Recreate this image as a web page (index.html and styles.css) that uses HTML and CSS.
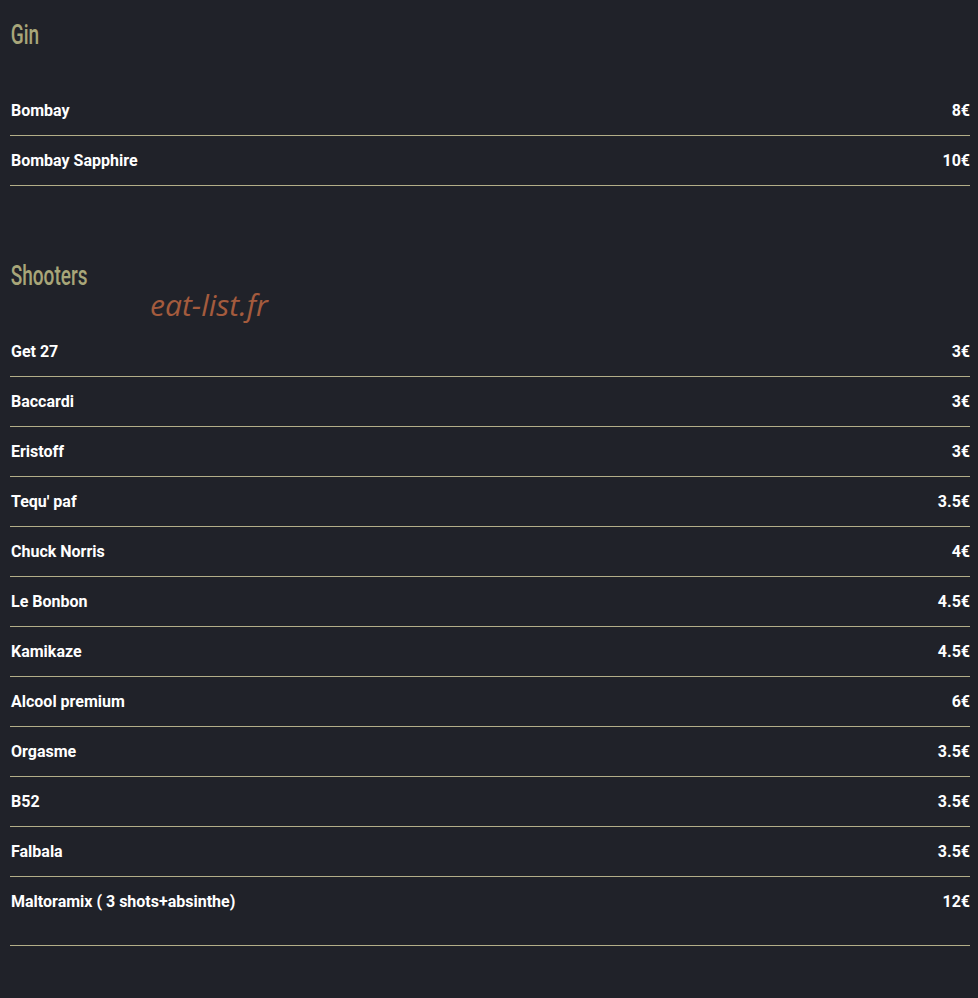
FILE: index.html
```html
<!DOCTYPE html>
<html lang="fr">
<head>
<meta charset="utf-8">
<title>Carte</title>
<link rel="stylesheet" href="styles.css">
</head>
<body>
<main class="menu">
  <section class="section section--first">
    <h2 class="section__title"><span class="section__label">Gin</span></h2>
    <ul class="items">
      <li class="item"><span class="item__name">Bombay</span><span class="item__price">8€</span></li>
      <li class="item"><span class="item__name">Bombay Sapphire</span><span class="item__price">10€</span></li>
    </ul>
  </section>
  <section class="section">
    <h2 class="section__title"><span class="section__label">Shooters</span></h2>
    <span class="watermark">eat-list.fr</span>
    <ul class="items">
      <li class="item"><span class="item__name">Get 27</span><span class="item__price">3€</span></li>
      <li class="item"><span class="item__name">Baccardi</span><span class="item__price">3€</span></li>
      <li class="item"><span class="item__name">Eristoff</span><span class="item__price">3€</span></li>
      <li class="item"><span class="item__name">Tequ' paf</span><span class="item__price">3.5€</span></li>
      <li class="item"><span class="item__name">Chuck Norris</span><span class="item__price">4€</span></li>
      <li class="item"><span class="item__name">Le Bonbon</span><span class="item__price">4.5€</span></li>
      <li class="item"><span class="item__name">Kamikaze</span><span class="item__price">4.5€</span></li>
      <li class="item"><span class="item__name">Alcool premium</span><span class="item__price">6€</span></li>
      <li class="item"><span class="item__name">Orgasme</span><span class="item__price">3.5€</span></li>
      <li class="item"><span class="item__name">B52</span><span class="item__price">3.5€</span></li>
      <li class="item"><span class="item__name">Falbala</span><span class="item__price">3.5€</span></li>
      <li class="item item--tall"><span class="item__name">Maltoramix ( 3 shots+absinthe)</span><span class="item__price">12€</span></li>
    </ul>
  </section>
</main>
</body>
</html>
```
FILE: styles.css
```css
html, body {
  margin: 0;
  padding: 0;
  background: #202229;
}
body {
  font-family: Roboto, "Liberation Sans", sans-serif;
  color: #ffffff;
}
.menu {
  width: 960px;
  margin-left: 10px;
}
.section {
  position: relative;
  padding-top: 70px;
}
.section--first {
  padding-top: 15px;
}
.section__title {
  margin: 0 0 31px 0;
  height: 40px;
  line-height: 40px;
  font-family: Roboto, "Liberation Sans", sans-serif;
  font-weight: 500;
  font-size: 28px;
  color: #a8a679;
}
.section__label {
  display: inline-block;
  padding-left: 1px;
  transform: scaleX(0.68);
  transform-origin: left center;
}
.watermark {
  position: absolute;
  left: 140px;
  top: 99px;
  font-family: "Open Sans", sans-serif;
  font-style: italic;
  font-size: 30px;
  line-height: 40px;
  color: #a45b3d;
}
.items {
  list-style: none;
  margin: 0;
  padding: 0;
}
.item {
  display: flex;
  justify-content: space-between;
  align-items: flex-start;
  line-height: 49px;
  height: 49px;
  border-bottom: 1px solid #b3ae88;
  font-size: 16px;
  font-weight: 700;
}
.item--tall {
  height: 68px;
}
.item__name {
  padding-left: 1px;
}
```
